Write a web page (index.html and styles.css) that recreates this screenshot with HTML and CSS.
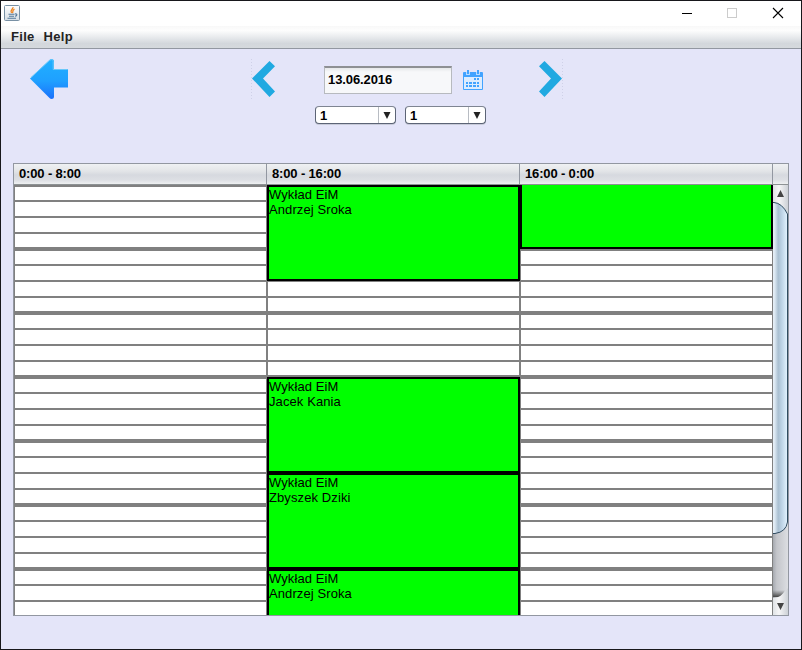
FILE: index.html
```
<!DOCTYPE html>
<html lang="pl">
<head>
<meta charset="utf-8">
<title>Plan</title>
<link rel="stylesheet" href="styles.css">
</head>
<body>
<div class="window">
  <div class="titlebar">
    <svg class="java" width="16" height="16" viewBox="0 0 16 16">
      <defs><linearGradient id="jb" x1="0" y1="0" x2="0" y2="1"><stop offset="0" stop-color="#fff"/><stop offset="1" stop-color="#d5dde4"/></linearGradient></defs>
      <rect x=".5" y=".5" width="15" height="15" rx="1" fill="url(#jb)" stroke="#7890a4"/>
      <path d="M9 2.200C9.300 4.200 5.500 5 7.500 8M10.500 4.200C7.500 5.500 9.800 6.500 8.300 8" fill="none" stroke="#ee8420" stroke-width="1.300"/>
      <path d="M4.500 9.300h6M5 11.300h5M3.500 13.300h8.500M11 9c2.500-.6 2.500 2 0 2.300" fill="none" stroke="#54799b" stroke-width="1.100"/>
    </svg>
    <svg class="controls" width="102" height="12" viewBox="0 0 102 12">
      <path d="M0 6.500h10" stroke="#000" fill="none"/>
      <rect x="45.500" y="1.500" width="9" height="9" fill="none" stroke="#ccc"/>
      <path d="M91 1l10 10M101 1l-10 10" stroke="#000" stroke-width="1.100" fill="none"/>
    </svg>
  </div>
  <div class="menubar"><span class="menu-file">File</span><span class="menu-help">Help</span></div>
  <div class="toolbar">
    <svg class="back" width="40" height="42" viewBox="0 0 40 42">
      <defs><linearGradient id="bk" x1="0" y1="0" x2="0" y2="1"><stop offset="0" stop-color="#20b0ff"/><stop offset=".55" stop-color="#1fa0ff"/><stop offset="1" stop-color="#1b70fb"/></linearGradient></defs>
      <path d="M1 20.500 20.500 2Q21.500 1 22.500 1Q25 1 25 3.500V11H38Q39 11 39 12V29.500H25V38.500Q25 41 22.500 41Q21.500 41 20.500 40Z" fill="url(#bk)"/>
      <path d="M2 19.500 20.800 2.200Q24 .5 24.200 3.500V11.500H38.500" fill="none" stroke="#69c8fa"/>
    </svg>
    <svg class="prev" width="26" height="40" viewBox="0 0 26 40">
      <path d="M.5 0v40" stroke="#cfd1e8" stroke-dasharray="1 2"/><path d="M1 19.500 18.500 2l5.500 5.200L12 19.500 24 32.500 18.500 38z" fill="#20a9e1"/>
    </svg>
    <div class="inputs">
      <div class="date-row">
        <div class="date">13.06.2016</div>
        <svg class="calendar" width="20" height="20" viewBox="0 0 20 20">
          <path d="M1 2h18q1 0 1 1v16q0 1-1 1H1q-1 0-1-1V3q0-1 1-1z" fill="#42a3ff"/>
          <path d="M1 7h18v12H1z" fill="#dcecff"/>
          <path d="M3 2h4v3H3zM13 2h4v3h-4z" fill="#b9dbff"/><path d="M4 0h2v4H4zM14 0h2v4h-2z" fill="#42a3ff"/>
          <path d="M11 8h2v2h-2zM14 8h2v2h-2zM3 12h2v2H3zM6 12h3v2H6zM10 12h3v2h-3zM14 12h2v2h-2zM3 15h2v2H3zM6 15h3v2H6zM10 15h3v2h-3zM14 15h2v2h-2z" fill="#42a3ff"/>
        </svg>
      </div>
      <div class="combo-row">
        <div class="combo"><span class="value">1</span><span class="drop"><svg width="8" height="7"><path d="M.5 0h7L4 7z" fill="#222"/></svg></span></div>
        <div class="combo"><span class="value">1</span><span class="drop"><svg width="8" height="7"><path d="M.5 0h7L4 7z" fill="#222"/></svg></span></div>
      </div>
    </div>
    <svg class="next" width="26" height="40" viewBox="0 0 26 40">
      <path d="M24.500 0v40" stroke="#cfd1e8" stroke-dasharray="1 2"/><path d="M24 19.500 6.500 2 1 7.200 13 19.500 1 32.500 6.500 38z" fill="#20a9e1"/>
    </svg>
  </div>
  <div class="schedule">
    <div class="head"><div class="th">0:00 - 8:00</div><div class="th">8:00 - 16:00</div><div class="th">16:00 - 0:00</div><div class="corner"></div></div>
    <div class="body">
      <div class="col"></div>
      <div class="col">
        <div class="event">Wykład EiM<br>Andrzej Sroka</div>
        <div class="free"></div>
        <div class="event">Wykład EiM<br>Jacek Kania</div>
        <div class="event">Wykład EiM<br>Zbyszek Dziki</div>
        <div class="event">Wykład EiM<br>Andrzej Sroka</div>
      </div>
      <div class="col"><div class="event continued"></div></div>
      <svg class="scrollbar" width="15" height="430" viewBox="0 0 15 430">
        <defs>
          <linearGradient id="tr"><stop offset="0" stop-color="#a6aab0"/><stop offset=".25" stop-color="#c3c5ca"/><stop offset="1" stop-color="#dcdee2"/></linearGradient>
          <linearGradient id="th"><stop offset="0" stop-color="#eef5fb"/><stop offset=".18" stop-color="#dce8f2"/><stop offset=".4" stop-color="#a9bfd1"/><stop offset=".65" stop-color="#bfd5e7"/><stop offset="1" stop-color="#e4f4ff"/></linearGradient>
          <linearGradient id="bt"><stop offset="0" stop-color="#dfe2e5"/><stop offset=".4" stop-color="#f6f6f7"/><stop offset="1" stop-color="#cdd1d6"/></linearGradient>
          <linearGradient id="sh" x1="0" y1="0" x2="0" y2="1"><stop offset="0" stop-color="#555" stop-opacity="0"/><stop offset="1" stop-color="#444"/></linearGradient>
        </defs>
        <path d="M0 0h15v430H0z" fill="url(#tr)"/>
        <path d="M0 0h15v30H0z" fill="url(#bt)"/>
        <path d="M0 405h12L8 412H0z" fill="url(#sh)"/>
        <path d="M0 413Q8 413 15 403V430H0z" fill="url(#bt)"/>
        <path d="M-1 17.500H1Q9 18 14.500 29V337Q13 347 2 348.500H-1z" fill="url(#th)" stroke="#304c61"/>
        <path d="M4 12 7.500 5 11 12zM4 418h7l-3.500 7z" fill="#444"/>
      </svg>
    </div>
  </div>
</div>
</body>
</html>
```
FILE: styles.css
```
* { box-sizing: border-box; }
body { margin: 0; font-family: "Liberation Sans", Arial, sans-serif; color: #000; }
.window { width: 802px; height: 650px; border: 1px solid #17171b; background: #e4e5f9; overflow: hidden; }
svg { display: block; flex: none; }
.titlebar { height: 25px; background: #fff; display: flex; justify-content: space-between; padding: 4px 17px 0 3px; }
.controls { margin-top: 2px; }
.menubar { height: 23px; display: flex; gap: 9px; padding: 3px 0 0 10px; font: bold 13px/16px "Liberation Sans", Arial, sans-serif; color: #232323; background: linear-gradient(#f8f8f8, #fdfdfd 20%, #eceef0 45%, #d3d7dc 80%, #d5d9dd); border-bottom: 1px solid #9297a1; letter-spacing: .3px; }
.toolbar { height: 114px; display: flex; align-items: flex-start; padding-left: 28px; }
.back { margin-top: 9px; }
.prev { margin: 10px 0 0 182px; }
.inputs { margin: 17px 0 0 38px; width: 171px; }
.date-row { display: flex; align-items: center; padding-left: 9px; gap: 11px; height: 28px; }
.date { width: 128px; height: 28px; border: 1px solid #b7babf; border-top: 2px solid #8e9094; background: linear-gradient(#e6e8ea, #f7f8fa 4px); padding-left: 3px; font-weight: bold; font-size: 13px; line-height: 23px; letter-spacing: -.1px; }
.combo-row { display: flex; gap: 9px; margin-top: 12px; }
.combo { width: 81px; height: 18px; border: 1px solid #5c6476; border-top-color: #7f8592; border-radius: 4px; background: #fff; display: flex; justify-content: space-between; box-shadow: 0 1px 0 #c7cad8; }
.value { padding-left: 4px; font: bold 13px/17px "Liberation Sans", Arial, sans-serif; }
.drop { width: 17px; border-left: 1px solid #b8bcc3; display: flex; align-items: center; justify-content: center; }
.next { margin: 10px 0 0 52px; }
.schedule { width: 776px; height: 453px; margin-left: 12px; border: 1px solid #9297a1; }
.head { display: flex; height: 21px; background: linear-gradient(#eff1f3, #e3e5e8 35%, #d6d9df 55%, #dddfe4 80%, #eef0f1); border-bottom: 1px solid #8d9294; }
.th { width: 253px; border-right: 1px solid #9297a1; padding-left: 5px; font-weight: bold; font-size: 13px; line-height: 19px; letter-spacing: -.15px; white-space: nowrap; }
.body { display: flex; height: 430px; overflow: hidden; }
.col { flex: none; width: 253px; height: 430px; border: solid #808080; border-width: 0 1px; background: repeating-linear-gradient(#808080 0 2px, #fff 2px 15px, #808080 15px 17px, #fff 17px 31px, #808080 31px 33px, #fff 33px 47px, #808080 47px 49px, #fff 49px 62px, #808080 62px 64px); }
.event { height: 96px; margin: 0 -1px; border: 2px solid #000; background: #0f0; font-size: 13px; line-height: 15px; color: #000; letter-spacing: .1px; }
.free { height: 96px; }
.continued { height: 64px; border-top: 0; }
```
